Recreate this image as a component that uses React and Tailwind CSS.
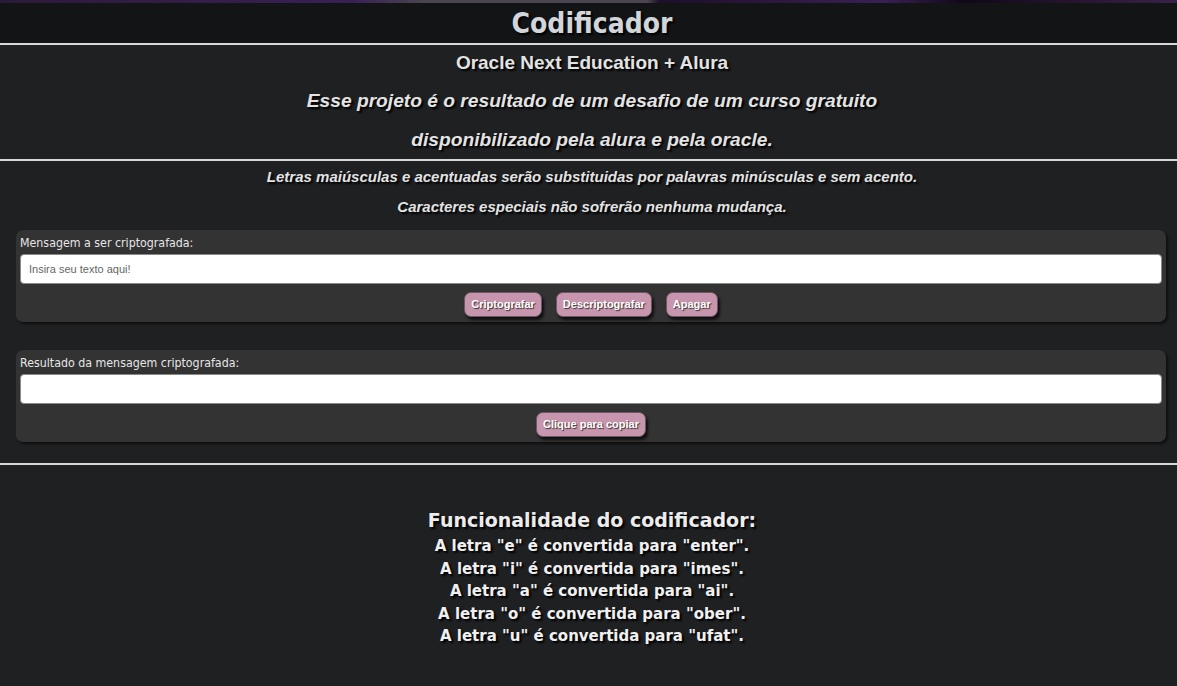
const regras = [
  { letra: "e", troca: "enter" },
  { letra: "i", troca: "imes" },
  { letra: "a", troca: "ai" },
  { letra: "o", troca: "ober" },
  { letra: "u", troca: "ufat" },
];

const Botao = ({ children }) => (
  <button className="h-[25px] px-[6px] rounded-[7px] bg-[#c895ae] border border-[#6b5862] text-white text-[11px] font-bold font-['Liberation_Sans',Arial,sans-serif] [text-shadow:1px_1px_1px_#333] shadow-[2px_3px_3px_rgba(0,0,0,0.7)]">
    {children}
  </button>
);

const Caixa = ({ label, placeholder, children }) => (
  <div className="ml-[16px] mr-[11px] bg-[#333333] rounded-[7px] px-[4px] pt-[4px] pb-[5px] shadow-[2px_2px_3px_rgba(0,0,0,0.6)]">
    <p className="text-[12.3px] leading-[18px] text-[#e6e6e6] font-['DejaVu_Sans_Condensed','DejaVu_Sans',sans-serif]">
      {label}
    </p>
    <input
      className="mt-[2px] w-full h-[30px] bg-white rounded-[4px] border border-[#8a8a8a] px-[8px] text-[11px] font-['Liberation_Sans',Arial,sans-serif] placeholder:text-[#666] outline-none"
      placeholder={placeholder}
    />
    <div className="flex justify-center gap-[14px] mt-[8px]">{children}</div>
  </div>
);

export default function App() {
  return (
    <div className="min-h-[686px] bg-[#1f2022] text-[#e3e3e3] font-['Liberation_Sans',Arial,sans-serif] [text-shadow:2px_2px_2px_#000]">
      <div className="h-[3px] bg-[linear-gradient(90deg,#2a1a3a_0%,#3a1f55_30%,#4a4550_36%,#4a4550_55%,#1d0f2a_56%,#3a1f55_75%,#100818_82%,#3a2048_100%)]" />
      <header className="h-[40px] pt-[2px] pl-[7px] bg-[#131416] flex items-center justify-center">
        <h1 className="text-[28px] font-bold text-[#d2d6da] font-['DejaVu_Sans_Condensed','DejaVu_Sans',sans-serif] leading-none">
          Codificador
        </h1>
      </header>
      <hr className="border-0 h-[2px] bg-[#d8d8d8]" />

      <section className="text-center font-bold pl-[7px]">
        <h2 className="text-[19px] leading-[20px] pt-[8px]">Oracle Next Education + Alura</h2>
        <p className="italic text-[19.2px] leading-[22px] mt-[17px]">
          Esse projeto é o resultado de um desafio de um curso gratuito
        </p>
        <p className="italic text-[19.2px] leading-[22px] mt-[17px]">
          disponibilizado pela alura e pela oracle.
        </p>
      </section>
      <hr className="border-0 h-[2px] bg-[#d8d8d8] mt-[8px]" />

      <section className="text-center font-bold italic text-[15px] leading-[18px] pl-[7px]">
        <p className="mt-[7px]">
          Letras maiúsculas e acentuadas serão substituidas por palavras minúsculas e sem acento.
        </p>
        <p className="mt-[12px]">Caracteres especiais não sofrerão nenhuma mudança.</p>
      </section>

      <div className="mt-[14px] [text-shadow:none]">
        <Caixa label="Mensagem a ser criptografada:" placeholder="Insira seu texto aqui!">
          <Botao>Criptografar</Botao>
          <Botao>Descriptografar</Botao>
          <Botao>Apagar</Botao>
        </Caixa>
      </div>

      <div className="mt-[28px] [text-shadow:none]">
        <Caixa label="Resultado da mensagem criptografada:" placeholder="">
          <Botao>Clique para copiar</Botao>
        </Caixa>
      </div>

      <hr className="border-0 h-[2px] bg-[#d8d8d8] mt-[21px]" />

      <section className="text-center font-bold font-['DejaVu_Sans',Verdana,sans-serif] pt-[43px] pb-[40px] pl-[7px]">
        <h3 className="text-[19px] leading-[24px] text-[#ececec]">Funcionalidade do codificador:</h3>
        <ul className="text-[15px] leading-[22.5px] mt-[3px] text-[#f0f0f0]">
          {regras.map((r) => (
            <li key={r.letra}>
              A letra "{r.letra}" é convertida para "{r.troca}".
            </li>
          ))}
        </ul>
      </section>
    </div>
  );
}
